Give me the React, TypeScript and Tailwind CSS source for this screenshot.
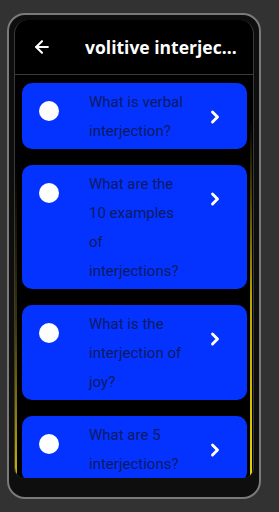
import { ArrowLeft, ChevronRight } from 'lucide-react';

const questions = [
  'What is verbal interjection?',
  'What are the 10 examples of interjections?',
  'What is the interjection of joy?',
  'What are 5 interjections?',
];

function QuestionCard({ text }: { text: string }) {
  return (
    <div className="flex items-start rounded-[10px] bg-[#0433ff] pb-[3px] pl-[17px] pr-[22px] pt-[5px]">
      <div className="mt-[13px] h-5 w-5 shrink-0 rounded-full bg-white" />
      <p className="ml-[30px] w-[96px] text-[15px] leading-[29px] text-[#0c1a62] [font-family:Roboto,sans-serif]">
        {text}
      </p>
      <ChevronRight className="ml-auto mt-[19px] h-5 w-5 text-white" strokeWidth={3.5} />
    </div>
  );
}

export default function App() {
  return (
    <div className="h-[512px] w-full overflow-hidden bg-[#323232] pl-[7px] pt-[13px]">
      {/* Phone frame */}
      <div className="h-[486px] w-[254px] rounded-[18px] border-2 border-[#7a7a7a] bg-[#0e0e0e] px-[5px] pt-[5px]">
        <div className="flex h-[458px] flex-col overflow-hidden rounded-t-[14px] rounded-b-[10px] border-x border-[#3a3a3a] bg-black">
          {/* Header */}
          <header className="flex h-[55px] shrink-0 items-center border-b border-[#3a3a3a] pl-[17px]">
            <ArrowLeft className="h-5 w-5 text-white" strokeWidth={2.5} />
            <h1 className="ml-[33px] truncate pr-1 text-[17.5px] font-bold text-white [font-family:'Open_Sans',sans-serif]">
              volitive interjec...
            </h1>
          </header>

          {/* List */}
          <div className="relative flex flex-1 flex-col gap-4 overflow-hidden pl-[7px] pr-[6px] pt-2">
            {questions.map((q) => (
              <QuestionCard key={q} text={q} />
            ))}
            <div className="absolute bottom-0 right-[1px] top-[45px] w-[2px] bg-gradient-to-b from-transparent via-[#b8a400] to-[#e6d200]" />
            <div className="absolute bottom-0 left-0 top-[90px] w-[2px] bg-gradient-to-b from-transparent via-[#3d3600] to-[#c9b800]" />
          </div>
        </div>
      </div>
    </div>
  );
}
